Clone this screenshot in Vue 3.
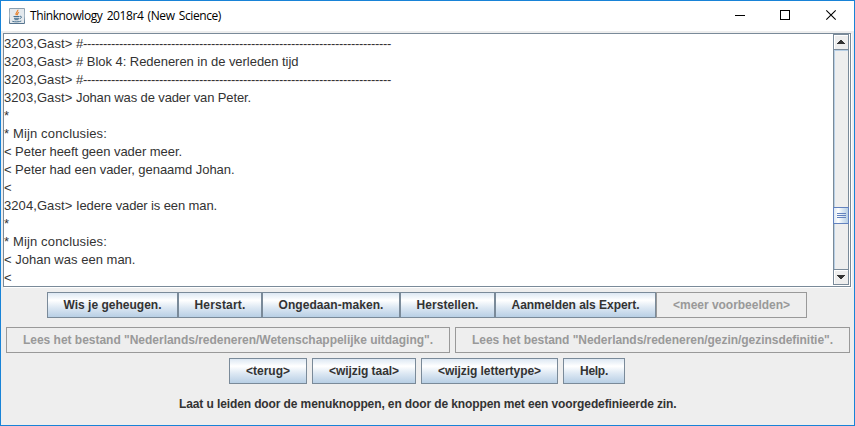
<script setup>
const prompt3 = { t: '3203,Gast> ', w: 72 }
const prompt4 = { t: '3204,Gast> ', w: 72 }
const rule = [prompt3, { t: '#', w: 7 }, { t: '-'.repeat(77), w: 308 }]
const log = [
  rule,
  [prompt3, { t: '# Blok 4: Redeneren in de verleden tijd', w: 222.5 }],
  rule,
  [prompt3, { t: 'Johan was de vader van Peter.', w: 175 }],
  [{ t: '*' }],
  [{ t: '* Mijn conclusies:', w: 103 }],
  [{ t: '< Peter heeft geen vader meer.', w: 178 }],
  [{ t: '< Peter had een vader, genaamd Johan.', w: 230.5 }],
  [{ t: '<' }],
  [prompt4, { t: 'Iedere vader is een man.', w: 141 }],
  [{ t: '*' }],
  [{ t: '* Mijn conclusies:', w: 103 }],
  [{ t: '< Johan was een man.', w: 131.5 }],
  [{ t: '<' }],
]
const mainButtons = [
  { t: 'Wis je geheugen.', b: 131, w: 98 },
  { t: 'Herstart.', b: 84, w: 51 },
  { t: 'Ongedaan-maken.', b: 138, w: 105 },
  { t: 'Herstellen.', b: 95, w: 62 },
  { t: 'Aanmelden als Expert.', b: 161, w: 128 },
  { t: '<meer voorbeelden>', b: 151, w: 117, off: true },
]
const fileButtons = [
  { t: 'Lees het bestand "Nederlands/redeneren/Wetenschappelijke uitdaging".', b: 444, w: 410, off: true },
  { t: 'Lees het bestand "Nederlands/redeneren/gezin/gezinsdefinitie".', b: 395, w: 361, off: true },
]
const menuButtons = [
  { t: '<terug>', b: 78, w: 44 },
  { t: '<wijzig taal>', b: 104, w: 70 },
  { t: '<wijzig lettertype>', b: 137, w: 103 },
  { t: 'Help.', b: 62, w: 28 },
]
const title = 'Thinknowlogy 2018r4 (New Science)'
const hint = 'Laat u leiden door de menuknoppen, en door de knoppen met een voorgedefinieerde zin.'

// Tracks text so that its advance width equals the given number of pixels.
const vFit = {
  mounted(el, { value }) {
    if (!value) return
    const gap = (value - el.getBoundingClientRect().width) / el.textContent.length
    el.style.letterSpacing = `${gap}px`
  },
}
</script>

<template>
  <div class="window">
    <header class="titlebar">
      <svg class="java" width="16" height="16" viewBox="0 0 16 16">
        <defs>
          <linearGradient id="tile" x1="0" y1="0" x2="0" y2="1">
            <stop offset="0" stop-color="#8a9eae" />
            <stop offset=".5" stop-color="#a9b8c4" />
            <stop offset="1" stop-color="#4f6f8b" />
          </linearGradient>
        </defs>
        <rect width="16" height="16" rx="1" fill="url(#tile)" />
        <rect x="1" y="1" width="14" height="14" fill="#e4e9ed" />
        <path d="M8.800 1.800c.7 2-3.200 2.500-1.300 5.400M10 4.200C7.800 5.200 8.600 6 8.500 7.300" fill="none" stroke="#e8832f" stroke-width="1.200" />
        <path d="M4.500 8.500h6M5 10.300h5M5.500 11.700h4M11 8.300c2.200-.3 1.700 2-.4 2.400M3.300 13.300c2 .8 7.200.8 9-.3" fill="none" stroke="#47708f" stroke-width="1" />
      </svg>
      <span class="title"><span v-fit="191">{{ title }}</span></span>
      <svg class="controls" width="110" height="30" viewBox="0 0 110 30" fill="none" stroke="#000">
        <path d="M4 14.500h10M49.500 9.500h9v9h-9z" shape-rendering="crispEdges" />
        <path d="M95.300 9.300l9.400 9.400M104.700 9.300l-9.400 9.400" stroke-width="1.100" />
      </svg>
    </header>

    <main class="pane">
      <div class="log">
        <div v-for="(line, i) in log" :key="i" class="line"><span v-for="(s, j) in line" :key="j" v-fit="s.w">{{ s.t }}</span></div>
      </div>
      <div class="scrollbar">
        <div class="arrow up"><svg width="8" height="4" shape-rendering="crispEdges"><path d="M3 0h2v1h1v1h1v1h1v1H0V3h1V2h1V1h1z" fill="#333" /></svg></div>
        <div class="track">
          <div class="thumb"><i></i><i></i><i></i></div>
        </div>
        <div class="arrow down"><svg width="8" height="4" shape-rendering="crispEdges"><path d="M0 0h8v1H7v1H6v1H5v1H3V3H2V2H1V1H0z" fill="#333" /></svg></div>
      </div>
    </main>

    <div class="row main-row">
      <button v-for="b in mainButtons" :key="b.t" :disabled="b.off" :style="{ width: b.b + 'px' }"><span v-fit="b.w">{{ b.t }}</span></button>
    </div>
    <div class="row file-row">
      <button v-for="b in fileButtons" :key="b.t" :disabled="b.off" :style="{ width: b.b + 'px' }"><span v-fit="b.w">{{ b.t }}</span></button>
    </div>
    <div class="row menu-row">
      <button v-for="b in menuButtons" :key="b.t" :disabled="b.off" :style="{ width: b.b + 'px' }"><span v-fit="b.w">{{ b.t }}</span></button>
    </div>
    <p class="hint"><span v-fit="497.5">{{ hint }}</span></p>
  </div>
</template>

<style>
body { margin: 0; overflow: hidden; }
</style>

<style scoped>
.window {
  box-sizing: border-box;
  width: 855px;
  height: 426px;
  border: 1px solid #1883d7;
  background: #eee;
  color: #333;
  font-family: "Liberation Sans", Arial, sans-serif;
  display: flex;
  flex-direction: column;
}
.titlebar {
  height: 30px;
  flex: none;
  background: #fff;
  display: flex;
  align-items: center;
  padding-left: 8px;
}
.title {
  flex: 1;
  margin-left: 5px;
  color: #000;
  font: 12px/16px "Open Sans", "Noto Sans", sans-serif;
  word-spacing: 1.5px;
  white-space: nowrap;
}
.controls { margin-right: 13px; }
.pane {
  box-sizing: border-box;
  flex: none;
  width: 848px;
  height: 254px;
  margin: 2px 0 0 2px;
  border: 1px solid #7a8a99;
  box-shadow: 1px 1px #fff;
  background: #fff;
  display: flex;
}
.log { flex: 1; padding-top: 1px; font-size: 13px; overflow: hidden; }
.line { height: 18px; line-height: 18px; white-space: pre; }
.scrollbar {
  box-sizing: border-box;
  width: 16px;
  margin: 0 1px 1px 0;
  border: 1px solid #7a8a99;
  display: flex;
  flex-direction: column;
  background: #eee;
}
.arrow {
  height: 14px;
  display: flex;
  align-items: center;
  justify-content: center;
  box-shadow: inset 1px 1px #fff;
}
.up { border-bottom: 1px solid #7a8a99; }
.down { border-top: 1px solid #7a8a99; }
.track { flex: 1; padding-top: 157px; box-shadow: inset 1px 1px #b8cfe5; }
.thumb {
  box-sizing: border-box;
  height: 17px;
  margin: 0 -1px;
  border: 1px solid #6382bf;
  background: linear-gradient(90deg, #dde8f3, #fff 30%, #dde8f3 60%, #b8cfe5);
  display: flex;
  flex-direction: column;
  align-items: center;
  justify-content: center;
  gap: 1px;
}
.thumb i { width: 9px; height: 1px; background: #6382bf; }
.row { flex: none; display: flex; height: 26px; }
.main-row { margin: 5px 0 0 46px; }
.file-row { margin: 9px 0 0 5px; gap: 5px; }
.menu-row { margin: 5px 0 0 228px; gap: 5px; }
button {
  box-sizing: border-box;
  flex: none;
  height: 26px;
  padding: 0;
  border: 1px solid #7a8a99;
  border-radius: 0;
  background: linear-gradient(#dde8f3, #fff 30%, #dde8f3 60%, #b8cfe5);
  color: #333;
  font: bold 12px/24px "Liberation Sans", Arial, sans-serif;
  white-space: nowrap;
}
button:disabled { background: #eee; border-color: #999; color: #999; }
.hint {
  margin: 12px 0 0 178px;
  font-weight: bold;
  font-size: 12px;
  line-height: 16px;
  white-space: nowrap;
}
</style>
